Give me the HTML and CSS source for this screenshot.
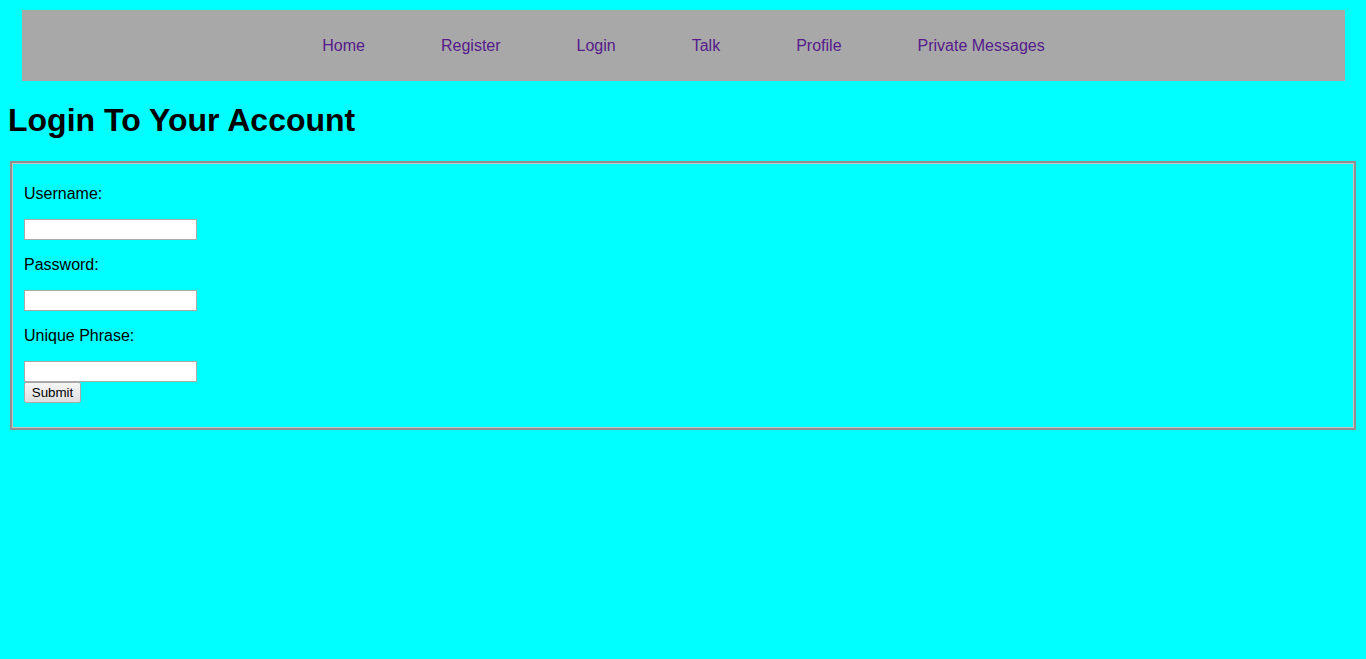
FILE: index.html
```html
<!DOCTYPE html>
<html>
<head>
<meta charset="utf-8">
<title>Login</title>
<link rel="stylesheet" href="styles.css">
</head>
<body>
<nav class="topnav">
  <ul class="nav-list">
    <li><a href="#">Home</a></li>
    <li><a href="#">Register</a></li>
    <li><a href="#">Login</a></li>
    <li><a href="#">Talk</a></li>
    <li><a href="#">Profile</a></li>
    <li><a href="#">Private Messages</a></li>
  </ul>
</nav>
<h1 class="title">Login To Your Account</h1>
<form class="login-form">
  <fieldset class="box">
    <p class="label">Username:</p>
    <input class="field" type="text">
    <p class="label">Password:</p>
    <input class="field" type="password">
    <p class="label">Unique Phrase:</p>
    <input class="field" type="text">
    <button class="submit" type="button">Submit</button>
  </fieldset>
</form>
</body>
</html>
```
FILE: styles.css
```css
html, body {
  background: #00ffff;
}
body {
  margin: 0;
  padding: 10px 8px 0;
  font-family: "Liberation Sans", Arial, sans-serif;
  font-size: 16px;
  color: #000;
}
.topnav {
  margin: 0 13px 0 14px;
  height: 71px;
  background: #a8a8a8;
}
.nav-list {
  list-style: none;
  margin: 0;
  padding: 1px 0 0;
  box-sizing: border-box;
  height: 100%;
  display: flex;
  justify-content: center;
  align-items: center;
  gap: 76px;
}
.nav-list a {
  color: #551a8b;
  text-decoration: none;
  font-size: 16px;
}
.title {
  font-size: 32px;
  font-weight: bold;
  margin: 21.44px 0;
  line-height: 37px;
}
.login-form {
  margin: 0;
}
.box {
  margin: 0 2px;
  padding: 6.6px 12px 25px;
  border: 2px solid #8f8f8f;
  box-shadow: inset 0 0 0 1px #c4c4c4;
  min-width: 0;
}
.label {
  margin: 16px 0;
  line-height: 18px;
}
.field {
  display: block;
  box-sizing: border-box;
  width: 173px;
  height: 21px;
  margin: 0;
  padding: 1px 2px;
  border: 1px solid #a9a9a9;
  background: #fff;
}
.submit {
  display: block;
  box-sizing: border-box;
  width: 57px;
  height: 21px;
  margin: 0;
  padding: 0 6px;
  font-family: "Liberation Sans", Arial, sans-serif;
  font-size: 13.33px;
  color: #000;
  border: 1px solid #a9a9a9;
  border-radius: 2px;
  background: linear-gradient(#f6f6f6, #dedede);
}
```
